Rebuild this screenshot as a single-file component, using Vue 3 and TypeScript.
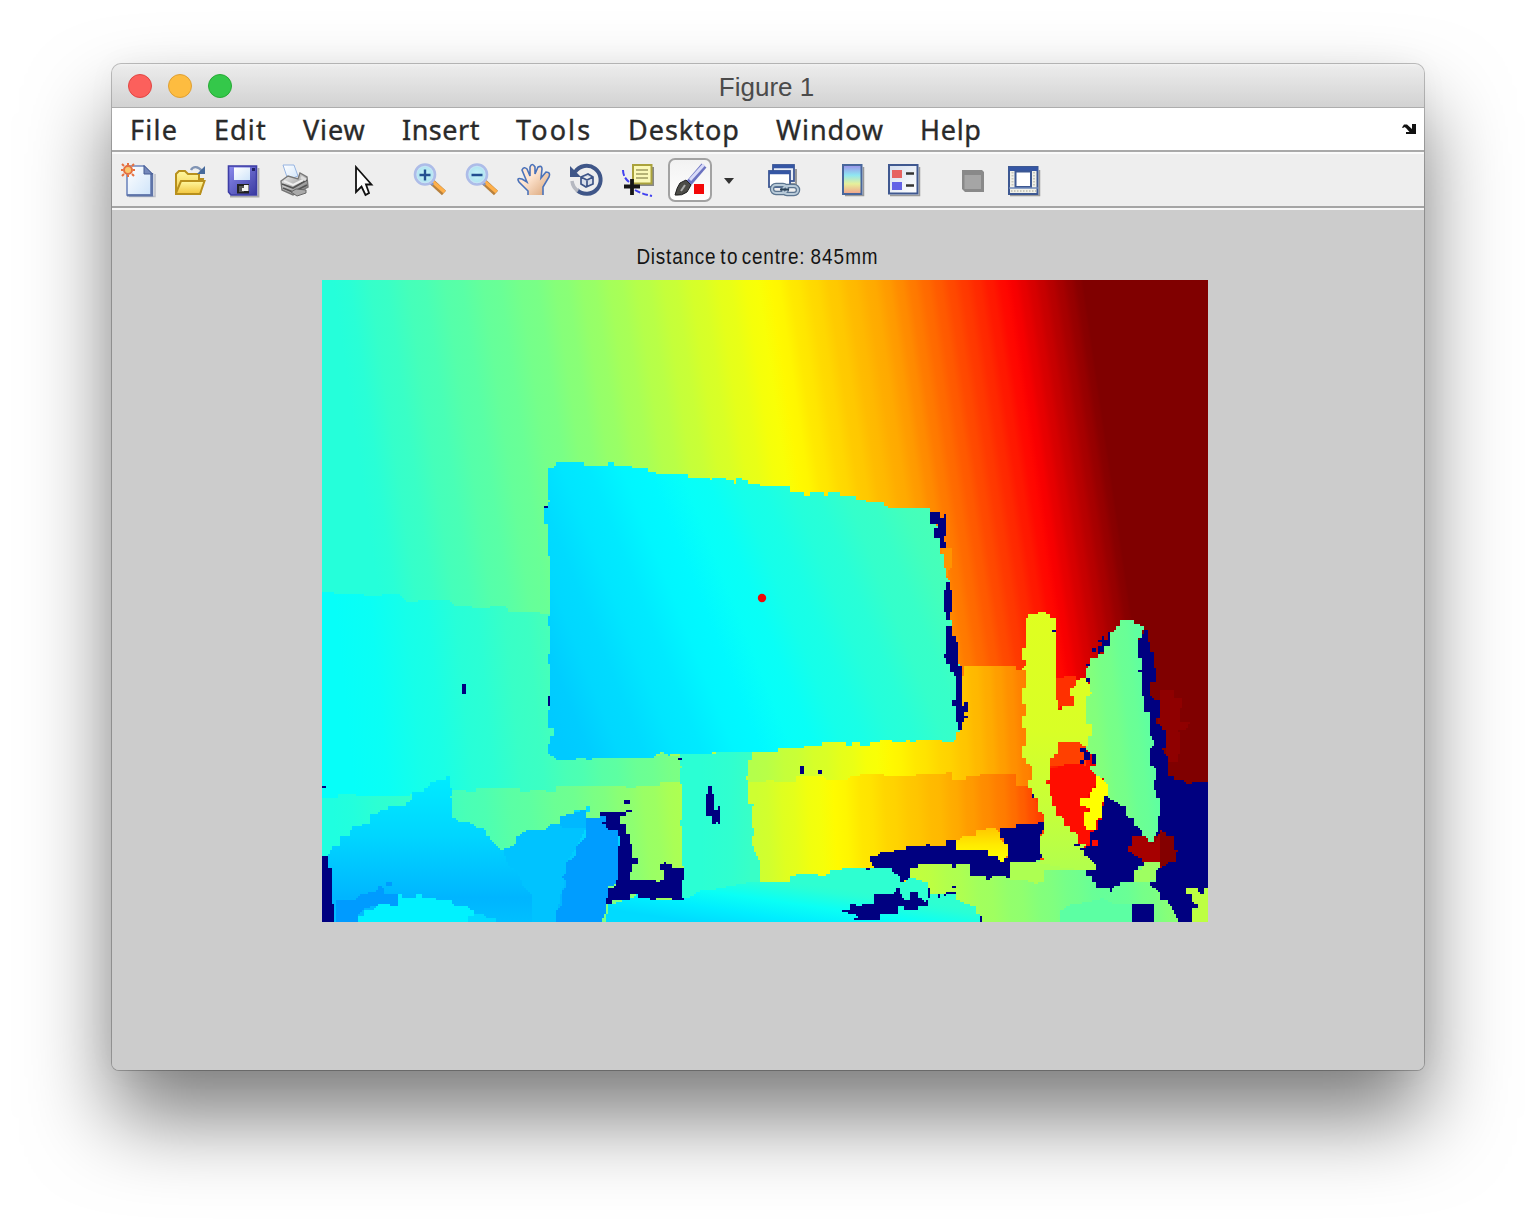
<script setup lang="ts">
type Origin = 'A' | 'B' | 'C' | 'D'
type Trace = [Origin, string]
interface Shape { d: string; fill: string }
interface Ramp { id: string; x1: number; y1: number; x2: number; y2: number; stops: { o: number; c: string }[] }

// Survey tiles: each holds contour points at a third of a pixel, relative to its corner.
const tiles: Record<Origin, [number, number]> = { A: [310, 580], B: [680, 580], C: [960, 580], D: [530, 440] }
const NAVY = '#000080'

// The "jet" colour map, u in 0..1
function jet(u: number): string {
  const ch = (k: number) => Math.round(255 * Math.max(0, Math.min(1, 1.5 - Math.abs(4 * u - k))))
  return `rgb(${ch(3)},${ch(2)},${ch(1)})`
}

const snap = (v: number) => Math.round(v / 2) * 2

// Contour made of two-pixel depth cells
function cells(...traces: Trace[]): string {
  const pts: [number, number][] = []
  for (const [key, list] of traces) {
    const [ox, oy] = tiles[key]
    for (const pair of list.trim().split(/\s+/)) {
      const [x, y] = pair.split(',').map(Number)
      pts.push([snap(ox + x / 3), snap(oy + y / 3)])
    }
  }
  pts.push(pts[0])
  let d = `M${pts[0][0]} ${pts[0][1]}`
  for (let i = 1; i < pts.length; i++) {
    const [ax, ay] = pts[i - 1]
    const [bx, by] = pts[i]
    const n = Math.max(1, Math.min(Math.abs(bx - ax), Math.abs(by - ay)) / 2)
    for (let k = 1; k <= n; k++) {
      d += `H${snap(ax + ((bx - ax) * k) / n)}V${snap(ay + ((by - ay) * k) / n)}`
    }
  }
  return d + 'Z'
}

// Anchors are [x on the base line, u]; slope is how far a contour line drifts right per pixel down.
function ramp(id: string, baseY: number, slope: number, anchors: [number, number][]): Ramp {
  const x0 = anchors[0][0]
  const span = anchors[anchors.length - 1][0] - x0
  const t = span / (1 + slope * slope)
  const stops: { o: number; c: string }[] = []
  for (let i = 1; i < anchors.length; i++) {
    const [xa, ua] = anchors[i - 1]
    const [xb, ub] = anchors[i]
    const n = Math.max(1, Math.round(Math.abs(ub - ua) * 64))
    for (let k = 0; k < n; k++) {
      const at = (f: number) => (xa + ((xb - xa) * (k + f)) / n - x0) / span
      stops.push({ o: at(0.28), c: jet(ua + ((ub - ua) * (k + 0.38)) / n) }, { o: at(0.72), c: jet(ua + ((ub - ua) * (k + 0.62)) / n) })
    }
  }
  stops.push({ o: 1, c: jet(anchors[anchors.length - 1][1]) })
  return { id, x1: x0, y1: baseY, x2: x0 + t, y2: baseY - slope * t, stops }
}

function vertical(id: string, anchors: [number, number][]): Ramp {
  const y0 = anchors[0][0]
  const y1 = anchors[anchors.length - 1][0]
  return { id, x1: 322, y1: y0, x2: 322, y2: y1, stops: anchors.map(([y, u]) => ({ o: (y - y0) / (y1 - y0), c: jet(u) })) }
}

const ramps: Ramp[] = [
  ramp('wall', 280, 0.145, [[322, 0.405], [547, 0.5], [765, 0.625], [880, 0.715], [1009, 0.875], [1083, 1]]),
  ramp('wallLow', 690, 0.1, [[322, 0.376], [400, 0.39], [548, 0.44], [690, 0.505]]),
  ramp('deskLeft', 830, 0.1, [[322, 0.4], [455, 0.44], [590, 0.49], [690, 0.55]]),
  ramp('screen', 480, 0.4, [[440, 0.318], [550, 0.345], [670, 0.375], [930, 0.45], [1000, 0.47]]),
  ramp('skirt', 750, 0.05, [[745, 0.545], [835, 0.595], [883, 0.625], [957, 0.675], [985, 0.7], [1030, 0.755]]),
  ramp('shelf', 820, 0.05, [[750, 0.57], [828, 0.622], [880, 0.66], [947, 0.7], [1010, 0.76], [1045, 0.82]]),
  ramp('stand', 800, 0, [[682, 0.41], [750, 0.43]]),
  ramp('green', 890, 0.1, [[910, 0.57], [1000, 0.525], [1060, 0.495], [1110, 0.47], [1160, 0.5], [1208, 0.55]]),
  ramp('cup', 700, 0.12, [[1080, 0.51], [1120, 0.485], [1160, 0.46]]),
  vertical('hill', [[776, 0.356], [835, 0.335], [880, 0.312], [898, 0.302], [921, 0.312]]),
  vertical('post', [[612, 0.594], [730, 0.588], [800, 0.572], [866, 0.55]]),
  vertical('amber', [[828, 0.68], [845, 0.645], [860, 0.625]]),
  { id: 'front', x1: 680, y1: 920, x2: 688, y2: 866, stops: [[0, 0.34], [0.3, 0.358], [0.6, 0.385], [0.9, 0.415], [1, 0.42]].map(([o, u]) => ({ o, c: jet(u) })) },
]

const s = (fill: string, ...t: Trace[]): Shape => ({ fill, d: cells(...t) })

const shapes: Shape[] = [
  s('#8f0000', ['C', '600,330 640,332 642,355 665,362 668,385 662,428 690,434 680,448 655,455 660,520 652,545 625,548 615,500 617,455 590,430 598,362']),
  s('url(#deskLeft)', ['A', '36,630 440,625 1114,590 1122,1025 36,1025']),
  s('url(#wallLow)', ['A', '36,36 66,36 72,43 160,43 164,48 210,48 214,44 270,48 285,65 320,65 324,60 390,62 420,68 430,76 480,76 484,83 540,80 590,84 594,95 630,98 680,98 690,102 730,102 740,500 1036,530 1055,516 1066,516 1080,526 1110,536 1115,604 1056,604 1050,615 980,622 950,617 780,618 740,624 735,635 715,635 710,628 665,628 660,635 636,635 630,625 500,625 500,633 475,635 470,628 425,635 300,650 215,645 150,650 140,643 90,643 85,652 50,652 36,645']),
  s('url(#skirt)', ['B', '205,480 700,460 800,440 845,290 850,255 885,252 890,258 1005,258 1008,268 1060,268 1060,660 200,660']),
  s('url(#shelf)', ['B', '200,603 245,605 255,600 280,605 345,603 350,590 425,588 435,598 500,598 510,588 540,582 610,587 700,588 710,583 800,580 800,574 815,575 818,598 850,600 855,588 900,583 1005,582 1005,620 1055,622 1060,650 1080,700 1096,720 1090,850 900,880 240,905 225,825']),
  s('url(#screen)', ['D', '55,100 55,84 70,80 75,66 160,66 162,78 232,78 235,66 250,66 252,78 285,84 288,78 303,78 306,84 350,84 356,96 380,101 473,101 476,114 535,114 540,119 545,114 580,115 585,120 612,122 612,130 618,130 618,115 635,115 638,120 652,120 655,131 690,132 692,138 772,138 780,155 820,157 823,166 838,166 840,157 882,157 883,166 893,166 895,157 930,157 932,168 970,168 975,180 1002,180 1005,186 1055,187 1060,198 1075,203 1195,204 1198,215 1215,260 1230,300 1232,340 1243,345 1243,385 1250,390 1250,415 1258,425 1258,540 1266,600'], ['B', '836,250 838,455 830,460 828,480 820,485 790,486 785,482 710,480 705,486 690,486 688,480 678,480 676,486 640,486 638,480 602,480 600,486 572,486 570,496 542,496 540,486 518,486 515,496 500,496 496,486 428,486 425,498 375,500 373,504 295,506 292,516 235,516 215,522 105,518 95,522 0,523'], ['A', '1080,526 1060,516 1035,526 1030,534 848,534 845,540 830,540 828,534 805,534 800,540 755,540 735,534 730,525 720,520 715,505 715,490 720,485 720,468 732,466 732,445 722,442 715,430 715,390 720,375 720,250 715,245 715,220 720,210 720,135 715,130 715,105 720,95 720,0'], ['D', '60,350 55,345 55,250 43,250 43,205 55,185 60,180']),
  s('url(#stand)', ['B', '2,523 100,520 105,516 215,516 215,540 205,545 205,590 200,600 205,670 220,675 216,695 218,745 222,770 218,800 225,825 240,850 240,970 10,970 6,870 12,860 5,740 0,735 0,720 5,715 5,610 0,605 0,565 5,560']),
  s('url(#front)', ['B', '-230,1025 -215,970 -150,955 -135,942 -125,952 -70,958 12,956 30,945 60,930 110,922 200,905 240,903 252,905 265,903 330,897 332,888 348,882 412,882 415,888 425,885 450,878 452,870 485,866 560,865 640,870 670,905 690,890 750,905 745,940 830,945 830,955 850,965 885,975 890,995 905,1005 905,1025']),
  s('url(#green)', ['B', '690,866 715,852 870,850 1000,838 1230,838 1585,838 1585,1025 905,1025 905,1008 890,995 888,975 850,965 830,955 828,940 750,940 745,905 690,890']),
  s(jet(0.545), ['C', '150,840 230,845 250,832 370,840 400,868 250,865 252,905 235,912 205,900 150,898']),
  s(jet(0.465), ['C', '295,1025 300,992 330,972 365,968 420,955 455,970 515,975 517,1025']),
  s('url(#hill)', ['A', '52,820 66,798 90,790 90,770 118,765 122,748 128,735 155,733 180,725 182,702 205,697 208,690 230,690 235,680 282,675 285,663 300,660 303,638 336,636 340,625 355,615 358,605 375,602 405,600 410,590 420,590 420,622 426,650 422,655 428,712 445,728 480,733 495,745 520,750 525,766 540,772 542,780 560,798 572,808 600,798 612,790 615,770 630,766 650,752 710,745 718,730 748,725 752,708 780,705 792,690 822,690 825,678 838,680 838,694 828,700 828,712 870,710 880,728 890,745 925,755 928,900 895,925 895,965 880,1000 875,1025 36,1025 36,830']),
  s(jet(0.316), ['A', '583,805 600,798 612,790 615,770 650,752 710,745 718,730 748,725 752,708 825,690 828,750 805,800 770,850 768,900 755,940 738,1025 668,1025 668,940 640,920 625,870 600,860 590,830']),
  s(jet(0.305), ['A', '752,708 825,685 826,745 760,745 748,725']),
  s(jet(0.279), ['A', '830,715 870,708 888,715 890,745 925,755 925,900 912,915 895,925 895,965 885,1000 875,1025 733,1025 735,990 752,975 755,930 768,920 768,900 757,885 770,875 770,845 790,830 800,800 815,780 825,760']),
  s(jet(0.277), ['A', '75,960 130,960 150,942 200,932 205,918 230,915 230,908 245,908 245,920 215,922 220,942 262,945 262,975 200,975 195,980 160,992 145,1010 145,1025 75,1025']),
  s(jet(0.362), ['A', '145,1025 145,1010 160,1005 162,992 190,986 195,976 205,974 235,972 237,978 262,976 264,944 275,944 278,952 315,952 320,942 335,944 338,954 370,954 375,960 420,962 430,975 470,978 478,990 490,992 492,1002 522,1005 530,1014 555,1018 560,1025']),
  s(jet(0.338), ['A', '475,1010 492,1002 522,1005 530,1014 555,1018 560,1025 475,1025']),
  s(NAVY, ['A', '36,828 53,828 53,863 67,863 67,970 73,970 73,1025 36,1025']),
  s(NAVY, ['A', '456,312 468,312 468,342 456,342']),
  s(NAVY, ['A', '714,348 720,348 720,378 714,378']),
  s(NAVY, ['A', '36,618 48,618 48,624 36,624']),
  s(NAVY, ['A', '1104,534 1116,534 1116,540 1104,540']),
  s(NAVY, ['A', '943,660 960,660 960,672 943,672']),
  s(NAVY, ['A', '948,690 966,690 966,696 948,696']),
  s(NAVY, ['A', '870,696 948,696 945,708 932,712 930,732 942,734 945,745 950,762 960,764 960,790 966,796 968,832 980,836 984,850 968,852 966,876 960,882 960,900 1034,900 1036,906 1048,906 1050,900 1062,900 1062,870 1050,868 1050,852 1062,852 1062,846 1070,852 1086,852 1086,864 1122,864 1122,902 1116,905 1116,954 1122,958 1092,958 1088,954 1040,954 1038,960 1022,960 1018,954 985,952 982,942 966,942 960,958 908,960 905,970 895,970 890,955 895,950 895,925 912,918 915,900 925,898 925,798 930,795 930,765 925,748 895,745 888,730 876,730 876,724 888,722 885,710 870,708']),
  s('url(#amber)', ['B', '828,782 845,768 885,768 890,752 918,745 950,748 955,756 960,780 985,800 985,830 970,845 950,835 922,832 915,810 828,808']),
  s(NAVY, ['B', '570,828 582,828 600,818 620,816 640,810 675,812 680,798 732,798 736,792 748,794 750,800 775,796 795,790 795,780 828,780 828,808 915,810 922,825 950,828 960,845 970,845 974,835 985,830 985,790 972,788 970,775 960,770 958,745 1005,742 1008,733 1068,732 1075,728 1090,732 1090,750 1082,765 1082,810 1090,830 1088,836 1070,846 1000,846 990,838 990,895 980,888 940,890 930,898 920,898 918,885 872,880 870,852 828,852 826,862 816,862 814,852 715,852 714,862 690,866 690,892 672,905 660,902 658,888 640,878 635,866 558,868 582,860']),
  s(NAVY, ['B', '488,990 505,990 508,973 522,973 526,978 540,978 544,972 583,970 583,943 622,940 642,935 645,925 658,925 660,942 670,960 690,955 690,938 712,938 714,955 732,965 745,955 745,975 715,978 712,988 675,988 672,980 655,980 655,1000 602,1002 600,1020 524,1020 524,1012 536,1010 530,1002 505,998 488,998']),
  s(NAVY, ['B', '744,924 749,924 749,952 744,952']),
  s(NAVY, ['B', '774,942 780,942 780,954 774,954']),
  s(NAVY, ['B', '792,948 792,942 798,936 828,936 828,942 800,942 798,950']),
  s(NAVY, ['B', '816,918 828,918 828,924 816,924']),
  s(NAVY, ['B', '900,1008 906,1008 906,1025 900,1025']),
  s(NAVY, ['B', '360,558 372,558 372,582 360,582']),
  s(NAVY, ['B', '414,570 426,570 426,582 414,582']),
  s(NAVY, ['B', '84,618 96,618 96,640 102,642 102,690 114,690 114,678 120,678 120,732 114,732 112,726 108,732 96,732 96,710 84,710 78,714 78,642 84,640']),
  s(NAVY, ['B', '798,6 810,6 810,30 816,32 816,96 810,98 810,120 800,120 798,96 793,94 793,32 798,30']),
  s(NAVY, ['B', '798,138 816,138 816,165 828,170 828,185 834,190 836,255 846,258 846,288 824,288 822,276 812,272 812,252 798,250 798,236 793,232 793,222 798,220']),
  s(NAVY, ['B', '830,290 846,292 846,378 852,380 852,366 863,366 863,396 852,398 852,408 863,408 863,414 850,416 850,424 845,426 845,450 834,450 834,424 828,420 828,378 816,376 816,360 828,360']),
  s(jet(0.73), ['D', '1236,326 1264,330 1264,386 1258,392 1256,410 1250,410 1250,386 1242,384 1242,344 1236,340']),
  s(NAVY, ['D', '1200,214 1212,216 1230,224 1230,235 1242,235 1242,222 1248,222 1248,290 1242,294 1242,304 1248,306 1248,322 1230,322 1230,292 1212,288 1212,262 1222,258 1222,252 1212,254 1200,256']),
  s(NAVY, ['D', '43,198 54,198 54,204 43,204']),
  s('#ff3000', ['C', '288,292 312,288 350,292 345,376 308,378 295,388 288,360']),
  s('#ff4000', ['C', '272,535 295,486 360,486 380,505 380,556 272,562']),
  s('#ff0d00', ['C', '270,562 310,553 372,556 378,540 388,545 390,570 408,585 408,620 390,640 370,680 385,690 378,740 390,760 390,790 360,792 335,755 312,735 308,712 290,705 288,680 276,675 272,650 255,605 265,595']),
  s('url(#post)', ['C', '198,112 205,102 232,102 236,96 258,96 260,102 270,104 272,112 288,116 288,360 295,388 305,390 308,378 340,376 342,348 330,340 330,325 342,318 345,302 355,300 358,292 375,290 385,310 400,335 400,490 385,500 370,500 358,486 295,486 293,520 285,522 282,535 270,537 270,597 260,600 260,614 270,616 272,650 276,675 288,680 290,705 308,712 312,735 328,740 332,755 345,760 355,780 355,792 375,800 372,820 390,835 405,850 405,868 380,868 300,860 240,848 252,832 242,810 240,765 250,755 252,700 235,690 232,655 222,650 215,625 205,620 205,600 215,595 215,560 198,545 198,535 187,530 187,500 198,495 198,445 187,440 187,408 198,405 198,370 187,365 187,326 198,322 198,272 187,262 198,250 198,240 187,235 187,206 198,202']),
  s('#ffff00', ['C', '410,588 424,588 428,598 436,600 443,610 443,655 428,672 426,713 412,718 410,748 380,750 378,738 372,735 372,698 388,690 388,684 375,676 362,676 362,655 385,652 388,635 395,625 410,615']),
  s(NAVY, ['C', '552,150 563,150 565,186 572,190 572,215 580,218 580,262 586,270 586,305 572,305 570,345 580,360 598,362 598,412 588,415 590,432 600,435 605,450 617,455 617,505 608,510 610,520 620,525 625,585 634,588 640,600 672,605 675,612 695,616 698,606 745,605 745,922 732,924 732,940 720,940 705,928 685,924 678,930 680,938 695,942 700,965 713,975 713,985 697,990 697,1025 658,1025 640,990 625,962 602,955 598,935 570,912 572,905 586,905 588,870 600,860 600,775 560,740 540,400 553,393 547,345 535,235 535,180']),
  s(NAVY, ['C', '430,650 443,655 462,662 480,670 497,675 503,710 520,715 522,738 545,745 560,775 540,800 550,835 550,855 538,858 535,868 523,870 520,905 482,902 480,918 460,922 455,934 448,922 410,915 408,906 395,902 393,888 380,885 380,870 408,865 408,850 390,835 372,820 372,808 362,802 388,790 392,755 412,745 415,718 428,712 428,680']),
  s('url(#cup)', ['C', '450,155 463,148 465,136 480,135 482,120 515,120 520,130 534,132 538,138 548,140 552,150 545,175 535,180 535,235 547,240 547,345 553,352 553,393 570,395 572,465 580,485 580,500 572,508 572,555 588,570 588,600 582,610 582,630 590,655 600,660 600,710 596,755 585,768 580,788 566,790 552,775 548,750 535,740 522,730 520,715 503,710 497,675 480,672 462,660 450,655 443,650 443,610 430,595 410,580 395,570 390,555 405,550 405,522 390,518 376,495 385,470 395,460 395,432 380,425 380,350 395,335 390,300 375,290 380,265 390,250 392,235 410,232 412,220 430,215 432,200 450,195']),
  s('#a60000', ['C', '515,768 545,765 555,775 568,790 580,788 600,752 605,862 598,848 550,845 546,832 520,820 505,808 505,795 518,790']),
  s('#840000', ['C', '600,755 618,755 620,765 640,770 642,812 653,818 650,845 625,850 618,860 600,862']),
  s('#ff0d00', ['C', '396,780 414,780 414,797 396,797']),
  s(jet(0.53), ['C', '523,870 538,868 550,848 600,846 600,862 588,872 586,900 570,905 523,900']),
  s(jet(0.56), ['C', '680,925 708,926 722,942 733,940 735,924 745,922 745,1025 697,1025 697,990 713,985 713,972 700,965 695,942 680,938']),
  s(NAVY, ['C', '517,972 582,972 582,1025 523,1025 517,1018']),
  s(NAVY, ['C', '414,180 428,180 428,168 433,170 433,180 444,180 444,156 450,156 450,196 432,198 432,216 420,220 414,214 414,200 428,198 426,188 414,192']),
  s(NAVY, ['C', '396,204 408,204 408,216 396,216']),
  s(NAVY, ['C', '378,252 390,252 390,258 378,258']),
  s(NAVY, ['C', '378,294 390,294 390,306 378,306']),
  s(NAVY, ['C', '276,150 288,150 288,156 276,156']),
  s(NAVY, ['C', '534,270 546,270 546,276 534,276']),
  s(NAVY, ['C', '215,642 221,642 221,654 215,654']),
  s(NAVY, ['C', '342,792 360,792 360,797 342,797']),
  s(NAVY, ['C', '360,503 378,503 378,515 390,515 390,540 396,540 396,522 408,522 408,552 396,552 394,542 372,537 372,551 360,551 360,540 372,532 372,516 360,515']),
]

const menus = [
  { label: 'File', w: 84, ls: 1.3 },
  { label: 'Edit', w: 89, ls: 1.1 },
  { label: 'View', w: 99, ls: 0.9 },
  { label: 'Insert', w: 114, ls: 0.5 },
  { label: 'Tools', w: 112, ls: 2.1 },
  { label: 'Desktop', w: 148, ls: 1 },
  { label: 'Window', w: 144, ls: 0.9 },
  { label: 'Help', w: 70, ls: 0.7 },
]
</script>

<template>
  <div class="desk">
    <div class="window">
      <header class="titlebar">
        <div class="lights"><i class="close"></i><i class="mini"></i><i class="full"></i></div>
        <span class="title">Figure 1</span>
      </header>

      <nav class="menubar">
        <span v-for="m in menus" :key="m.label" :style="{ width: m.w + 'px', letterSpacing: m.ls + 'px' }">{{ m.label }}</span>
        <svg class="dock" width="16" height="12" viewBox="0 0 16 12"><path d="M1 4.500L3 1.500H6L11 6V1H15V11H5V9H8.500L5 5L3.500 4L2 5Z" fill="#111" /></svg>
      </nav>

      <div class="toolbar">
        <svg width="0" height="0" class="defs">
          <defs>
            <linearGradient id="page" x2="1" y2="1"><stop offset="0" stop-color="#fff" /><stop offset="1" stop-color="#cfe4fa" /></linearGradient>
            <linearGradient id="gold" y2="1" x2="0"><stop offset="0" stop-color="#fff8a0" /><stop offset="1" stop-color="#f2c53d" /></linearGradient>
            <linearGradient id="disk" x2="1" y2="1"><stop offset="0" stop-color="#8c8cee" /><stop offset="1" stop-color="#3a3aa0" /></linearGradient>
            <linearGradient id="metal" x2="1" y2="1"><stop offset="0" stop-color="#f4f4f4" /><stop offset="1" stop-color="#777" /></linearGradient>
            <radialGradient id="lens"><stop offset="0" stop-color="#c8f6fa" /><stop offset=".7" stop-color="#b4e6f2" /><stop offset="1" stop-color="#d9e6fa" /></radialGradient>
            <linearGradient id="skin" x2="1" y2="1"><stop offset=".4" stop-color="#ffe6d2" /><stop offset="1" stop-color="#d8a274" /></linearGradient>
            <linearGradient id="bar" x2="0" y2="1"><stop offset="0" stop-color="#9c90ea" /><stop offset=".35" stop-color="#8fe6f2" /><stop offset=".65" stop-color="#e6f09a" /><stop offset="1" stop-color="#f2a08c" /></linearGradient>
            <linearGradient id="panel" x2="1" y2="1"><stop offset="0" stop-color="#d4deee" /><stop offset="1" stop-color="#fff" /></linearGradient>
          </defs>
        </svg>

        <svg class="icon" viewBox="0 0 36 36">
          <path d="M8 34.500H34V12" fill="none" stroke="#9a9eae" stroke-width="1.500" opacity=".6" />
          <path d="M6 4H23L30 11V33H6Z" fill="url(#page)" stroke="#6f86bd" stroke-width="1.600" />
          <path d="M31 11V33.400H6" fill="none" stroke="#5f74a8" stroke-width="2.400" />
          <path d="M23 3.500V12H31.500Z" fill="#7488bb" stroke="#445a92" />
          <g stroke="#e6703f" stroke-width="2"><path d="M1 2L3 4M13 2L11 4M1 14L3 12M13 14L11 12M7 1V3M7 13V15M0 8H2M12 8H14" /><circle cx="7" cy="8" r="4" fill="#f8c870" /></g>
        </svg>
        <svg class="icon" viewBox="0 0 36 36">
          <path d="M2 12L5 9H11L14 12H25V17H29L26 32H2Z" fill="url(#gold)" stroke="#b8901c" stroke-width="2" />
          <path d="M2 31L7 19H30.500L26 32H2Z" fill="url(#gold)" stroke="#b8901c" stroke-width="2" />
          <path d="M17 8C19 4 24 4 28 9" fill="none" stroke="#8094b4" stroke-width="2.400" /><path d="M31 4V12H23Z" fill="#466a9c" />
        </svg>
        <svg class="icon" viewBox="0 0 36 36">
          <path d="M4 34.500H32.500V6" fill="none" stroke="#aaa" stroke-width="1.800" />
          <path d="M2.500 4H30.500V33H5L2.500 30Z" fill="url(#disk)" stroke="#3d3da6" stroke-width="1.600" />
          <rect x="8" y="5.500" width="16" height="12.500" fill="url(#page)" /><rect x="26" y="6" width="3" height="3" fill="#222266" />
          <rect x="11" y="22" width="12" height="9.500" fill="#222" /><rect x="13" y="24" width="5" height="6" fill="#555" /><path d="M18 23H22.500V29H16V26H18Z" fill="#f3f3f3" />
        </svg>
        <svg class="icon" viewBox="0 0 36 36">
          <path d="M4 3H15L19 14L9 18Z" fill="url(#page)" stroke="#96b4e2" />
          <path d="M2 19L9 14L19 17L21 11L28 15L29 25L14 33L3 28Z" fill="url(#metal)" stroke="#777" stroke-width="1.400" />
          <path d="M3 22L14 26L28 18M4 26L14 30L28 23" fill="none" stroke="#555" stroke-width="1.800" /><path d="M12 30L17 27L27 28V31L18 34Z" fill="#aaa" stroke="#666" /><path d="M5 19L14 23L24 18" fill="none" stroke="#eee" stroke-width="2" /><path d="M22 15L27 18" stroke="#ddd" stroke-width="3" />
        </svg>
        <svg class="icon pointer" viewBox="0 0 36 36"><path d="M5 5V30L10.500 24.500L14.500 33L18 31L15 22.500H20.500Z" fill="#fff" stroke="#111" stroke-width="1.800" /></svg>
        <svg class="icon zoom" viewBox="0 0 36 36">
          <path d="M20 20L32 31" stroke="#b8803c" stroke-width="6" /><path d="M20.500 19.500L32.500 30" stroke="#ffb04a" stroke-width="3.500" /><path d="M17 19L21 23" stroke="#8094c4" stroke-width="3" />
          <circle cx="13" cy="12.500" r="10" fill="url(#lens)" stroke="#adbce8" stroke-width="2.600" /><path d="M7.500 13H18.500M13 7.500V18.500" stroke="#234f91" stroke-width="2.400" />
        </svg>
        <svg class="icon" viewBox="0 0 36 36">
          <path d="M20 20L32 31" stroke="#b8803c" stroke-width="6" /><path d="M20.500 19.500L32.500 30" stroke="#ffb04a" stroke-width="3.500" /><path d="M17 19L21 23" stroke="#8094c4" stroke-width="3" />
          <circle cx="13" cy="12.500" r="10" fill="url(#lens)" stroke="#adbce8" stroke-width="2.600" /><path d="M7.500 13H18.500" stroke="#234f91" stroke-width="2.400" />
        </svg>
        <svg class="icon" viewBox="0 0 36 36"><path d="M12 33V29L3 20Q0 15 6 17L11 20L6 8Q8 4 11 7L14 13L13 5Q16 0 19 5V13L22 5Q26 3 26 7L25 16L30 10Q35 10 33 15L27 25V33Z" fill="url(#skin)" /><path d="M12 33V29L3 20Q0 15 6 17L11 20L6 8Q8 4 11 7L14 14V5Q16 0 19 5V12L22 5Q26 3 26 7L25 16L30 10Q35 10 33 15L27 25V33" fill="none" stroke="#4a72ba" stroke-width="1.600" /></svg>
        <svg class="icon" viewBox="0 0 36 36">
          <path d="M7 10A14 14 0 1 1 9 28" fill="none" stroke="#3f5688" stroke-width="4" /><path d="M10 29A14 14 0 0 1 4 19" fill="none" stroke="#b5b8c0" stroke-width="3.500" /><path d="M2 4V15H13Z" fill="#3f5688" />
          <path d="M13 15L20 12L25 15V22L18 25L13 22ZM13 15L19 18L25 15M19 18V25" fill="#d9dfea" stroke="#3f5688" stroke-width="1.700" />
        </svg>
        <svg class="icon" viewBox="0 0 36 36">
          <path d="M3 8Q3 15 9 20M15 28Q22 32 32 34" fill="none" stroke="#4141f0" stroke-width="2" stroke-dasharray="6 2" />
          <path d="M14 23H33V5" fill="none" stroke="#888" stroke-width="2" /><rect x="13" y="3" width="18.500" height="18.500" fill="#fbf9b8" stroke="#aaa23c" stroke-width="2" /><path d="M16 8H28M16 12H28M16 16H28" stroke="#a09c60" stroke-width="1.400" />
          <path d="M4 24.500H20M12 17V33" stroke="#161616" stroke-width="3.800" />
        </svg>
        <button class="brush">
          <svg width="36" height="36" viewBox="0 0 36 36">
            <path d="M31 2.500L16 20" stroke="#6b72c0" stroke-width="6.500" /><path d="M31 1.500L17 17" stroke="#d8daf8" stroke-width="3" />
            <path d="M2 32Q4 24 7 20L13 17L18 22L14 29Q9 33 2 32Z" fill="#4c4c48" stroke="#222" /><path d="M8 28L12 22" stroke="#aaa" stroke-width="2" />
            <rect x="21" y="21" width="10" height="10" fill="#f40808" />
          </svg>
        </button>
        <svg class="caret" width="12" height="8" viewBox="0 0 12 8"><path d="M1 1H11L6 7Z" fill="#333" /></svg>
        <svg class="icon link" viewBox="0 0 36 36">
          <path d="M30 7V22H10" stroke="#999" stroke-width="2" fill="none" /><rect x="7" y="3" width="21" height="16" fill="#e9eef7" stroke="#3b5592" stroke-width="1.800" /><path d="M7 4.500H28" stroke="#3556a4" stroke-width="3.400" />
          <rect x="3" y="9" width="21" height="16" fill="#fff" stroke="#3b5592" stroke-width="1.800" /><path d="M3 10.500H24" stroke="#3556a4" stroke-width="3.400" />
          <g fill="none" stroke="#5c7590" stroke-width="4.500"><rect x="6" y="23" width="15" height="8" rx="4" /><rect x="17" y="24" width="15" height="8" rx="4" /></g><g fill="none" stroke="#b8cad8" stroke-width="2"><rect x="6" y="23" width="15" height="8" rx="4" /><rect x="17" y="24" width="15" height="8" rx="4" /></g><path d="M14 27.500H23" stroke="#2d4358" stroke-width="2" />
        </svg>
        <svg class="icon colorbar" viewBox="0 0 36 36"><path d="M5 33.500H23.500V5" fill="none" stroke="#999" stroke-width="1.500" /><rect x="3" y="3" width="18.500" height="29" fill="url(#bar)" stroke="#48669c" stroke-width="2" /></svg>
        <svg class="icon legend" viewBox="0 0 36 36"><path d="M4 33.500H33.500V5" fill="none" stroke="#999" stroke-width="1.500" /><rect x="3" y="3" width="28.500" height="28.500" fill="url(#panel)" stroke="#3f5890" stroke-width="2" /><rect x="6" y="8" width="10" height="8" fill="#e66262" /><rect x="6" y="20" width="10" height="8" fill="#6262e6" /><path d="M20 11.500H28M20 23.500H28" stroke="#333" stroke-width="2.400" /></svg>
        <svg class="icon hidetools" viewBox="0 0 36 36"><path d="M2 8H22L24 10V30H5L2 27Z" fill="#898989" /><rect x="4.500" y="13" width="16.500" height="14" fill="#a5a5a5" /></svg>
        <svg class="icon showtools" viewBox="0 0 36 36"><path d="M4 33.500H33.500V8" fill="none" stroke="#999" stroke-width="1.500" /><rect x="3" y="5" width="28.500" height="27" fill="#f0f0e8" stroke="#3d5892" stroke-width="2" /><path d="M3 7H32" stroke="#3556a4" stroke-width="4" /><rect x="9.500" y="9.500" width="15.500" height="15.500" fill="#fff" stroke="#3d5892" stroke-width="2" /><path d="M3 26H32" stroke="#6e88ba" stroke-width="1.500" /><path d="M6.500 10V25M28 10V25M5 29H30" stroke="#c9c8bd" stroke-width="2" stroke-dasharray="1.500 1.500" /></svg>
      </div>

      <main class="canvas">
        <svg class="axes" width="886" height="686" viewBox="322 236 886 686">
          <defs>
            <linearGradient v-for="r in ramps" :id="r.id" :key="r.id" gradientUnits="userSpaceOnUse" :x1="r.x1" :y1="r.y1" :x2="r.x2" :y2="r.y2">
              <stop v-for="(p, i) in r.stops" :key="i" :offset="p.o" :stop-color="p.c" />
            </linearGradient>
            <clipPath id="frame"><rect x="322" y="280" width="886" height="642" /></clipPath>
          </defs>
          <text class="caption" y="264" transform="scale(.86 1)">
            <tspan x="740" textLength="92" lengthAdjust="spacing">Distance</tspan>
            <tspan x="837.500" textLength="20">to</tspan>
            <tspan x="862.500" textLength="73">centre:</tspan>
            <tspan x="942.500" textLength="78">845mm</tspan>
          </text>
          <g clip-path="url(#frame)">
            <rect x="322" y="280" width="886" height="642" fill="url(#wall)" />
            <path v-for="(p, i) in shapes" :key="i" :d="p.d" :fill="p.fill" />
            <circle cx="762" cy="598" r="4.200" fill="#f00808" />
          </g>
        </svg>
      </main>
    </div>
  </div>
</template>

<style>
body { background: #fff; }
</style>

<style scoped>
.desk { width: 1536px; height: 1230px; padding: 64px 112px 0; box-sizing: border-box; overflow: hidden; background: #fff; }
.window {
  width: 1312px; height: 1006px; border-radius: 9px 9px 7px 7px; background: #ccc; overflow: hidden;
  display: flex; flex-direction: column;
  box-shadow: 0 0 0 1px rgba(0, 0, 0, .24), 0 48px 84px rgba(0, 0, 0, .51), 0 0 30px rgba(0, 0, 0, .04);
}
.titlebar { height: 44px; box-sizing: border-box; display: flex; align-items: center; padding-left: 16px; background: linear-gradient(#f2f2f2 0, #ebebeb 3px, #d2d2d2 100%); border-bottom: 1px solid #adadad; }
.lights { display: flex; gap: 16px; width: 300px; }
.lights i { width: 24px; height: 24px; box-sizing: border-box; border-radius: 50%; border: 1px solid; }
.close { background: #fc605c; border-color: #e14643 !important; }
.mini { background: #fdbc40; border-color: #dfa033 !important; }
.full { background: #34c84a; border-color: #27aa35 !important; }
.title { font: 26px/44px "Liberation Sans", sans-serif; color: #4b4b4b; width: 677px; text-align: center; padding-top: 2px; }
.menubar { height: 42px; background: #fff; display: flex; align-items: center; padding-left: 18px; font: 27px/44px "Noto Sans", sans-serif; color: #2a2a2a; -webkit-text-stroke: .35px #2a2a2a; }
.menubar span { flex: none; height: 42px; white-space: nowrap; }
.dock { margin-left: auto; margin-right: 7px; }
.toolbar { height: 60px; box-sizing: border-box; background: #eee; border-top: 2px solid #a9a9a9; border-bottom: 2px solid #f7f7f7; box-shadow: inset 0 2px #fafafa, inset 0 -2px #a4a4a4; display: flex; align-items: flex-start; padding: 10px 0 0 9px; }
.defs { flex: none; position: absolute; }
.icon { flex: none; width: 36px; height: 36px; margin-right: 16.500px; }
.pointer { margin-left: 20px; margin-right: 25px; }
.zoom ~ .icon { margin-right: 16px; }
.zoom { margin-right: 16px; }
.brush { flex: none; width: 44px; height: 44px; margin: -4px 0 0 -4px; padding: 3px; box-sizing: border-box; border: 2px solid #a2a2a2; border-radius: 7px; background: linear-gradient(#f2f2f2, #fff); }
.brush svg { display: block; }
.caret { margin: 15px 0 0 11px; flex: none; }
.icon.link { margin-left: 31px; margin-right: 38px; }
.icon.colorbar { margin-right: 10px; }
.icon.legend { margin-right: 38px; }
.icon.hidetools { margin-right: 10px; }
.canvas { flex: 1; padding: 26px 0 0 210px; background: #ccc; }
.axes { display: block; }
.caption { font: 22px "Liberation Sans", sans-serif; fill: #151515; }
</style>
